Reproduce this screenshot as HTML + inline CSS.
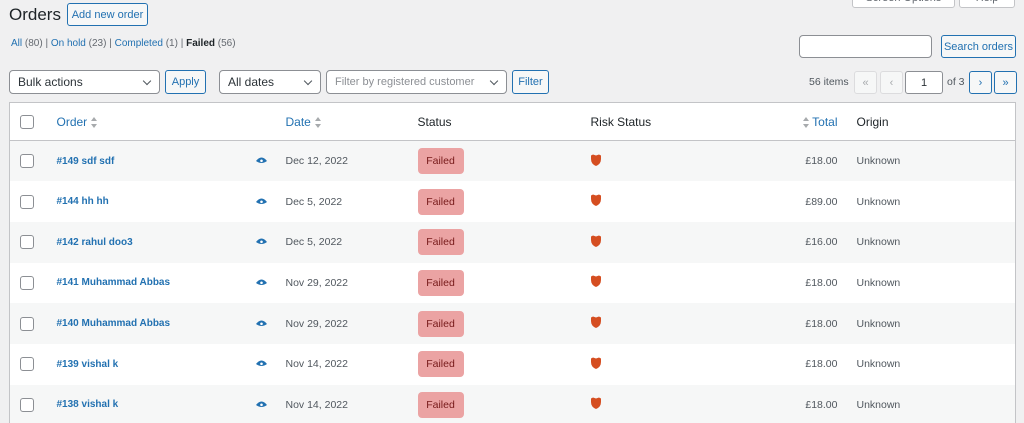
<!DOCTYPE html>
<html><head><style>
*{box-sizing:border-box;margin:0;padding:0}
html,body{width:1024px;height:423px;overflow:hidden}
body{background:#f0f0f1;font-family:"Liberation Sans",sans-serif;font-size:12px;color:#3c434a;position:relative}
.a{position:absolute}
.btn{position:absolute;border:1px solid #2271b1;color:#2271b1;background:#f6f7f7;border-radius:3px;font-size:11px;display:flex;align-items:center;justify-content:center;white-space:nowrap}
.sel{position:absolute;background:#fff;border:1px solid #8c8f94;border-radius:4px;font-size:12px;color:#2c3338;padding-left:8px;display:flex;align-items:center;white-space:nowrap}
.sel:after{content:"";position:absolute;right:9px;top:7px;width:5px;height:5px;border-right:1.5px solid #50575e;border-bottom:1.5px solid #50575e;transform:rotate(45deg)}
.pg{position:absolute;top:71px;width:23px;height:23px;border-radius:3px;display:flex;align-items:center;justify-content:center;font-size:11px}
a{color:#2271b1;text-decoration:none}
table{position:absolute;left:9px;top:102px;width:1007px;border:1px solid #c3c4c7;border-collapse:collapse;background:#fff;table-layout:fixed}
td,th{font-weight:normal;text-align:left;padding:0;vertical-align:middle;white-space:nowrap}
thead tr{height:38px;border-bottom:1px solid #c3c4c7}
thead td{font-size:12px}
tbody tr{height:40.7px}
tbody tr:nth-child(odd){background:#f6f7f7}
.cb{display:block;width:14px;height:14px;border:1px solid #8c8f94;border-radius:3px;background:#fff;margin-left:10px}
.ord{font-weight:bold;font-size:10px;color:#2271b1}
.d{font-size:10.5px;color:#50575e}
.f{display:inline-block;width:46px;height:26px;line-height:26px;text-align:center;background:#eba3a3;color:#761919;border-radius:4px;font-size:10.5px}
.t{text-align:right;font-size:10.5px;color:#50575e;padding-right:19px}
.o{font-size:10.5px;color:#50575e}
.sort{display:inline-block;vertical-align:middle;margin-left:4px;width:7px;height:11px;position:relative}
.sort:before{content:"";position:absolute;top:0;left:0;border:3.5px solid transparent;border-bottom:4px solid #a7aaad;border-top:0}
.sort:after{content:"";position:absolute;bottom:0;left:0;border:3.5px solid transparent;border-top:4px solid #a7aaad;border-bottom:0}
</style></head><body>
<div class="a" style="left:9px;top:5px;font-size:17px;color:#1d2327">Orders</div>
<div class="btn" style="left:67px;top:3px;width:81px;height:23px">Add new order</div>
<div class="btn" style="left:852px;top:-12px;width:103px;height:20px;border-color:#c3c4c7;background:#fff;color:#646970">Screen Options</div>
<div class="btn" style="left:959px;top:-12px;width:56px;height:20px;border-color:#c3c4c7;background:#fff;color:#646970">Help</div>
<div class="a" style="left:11px;top:38px;font-size:10px;color:#646970"><a>All</a> (80) | <a>On hold</a> (23) | <a>Completed</a> (1) | <b style="color:#1d2327">Failed</b> (56)</div>
<div class="a" style="left:799px;top:35px;width:133px;height:23px;background:#fff;border:1px solid #8c8f94;border-radius:4px"></div>
<div class="btn" style="left:941px;top:35px;width:75px;height:23px">Search orders</div>
<div class="sel" style="left:9px;top:70px;width:151px;height:24px">Bulk actions</div>
<div class="btn" style="left:165px;top:70px;width:41px;height:24px">Apply</div>
<div class="sel" style="left:219px;top:70px;width:102px;height:24px">All dates</div>
<div class="sel" style="left:326px;top:70px;width:181px;height:24px;color:#8c8f94;font-size:11px">Filter by registered customer</div>
<div class="btn" style="left:512px;top:70px;width:37px;height:24px">Filter</div>
<div class="a" style="left:809px;top:76px;font-size:10.5px;color:#50575e">56 items</div>
<div class="pg" style="left:854px;border:1px solid #dcdcde;color:#a7aaad;background:#f6f7f7">«</div>
<div class="pg" style="left:880px;border:1px solid #dcdcde;color:#a7aaad;background:#f6f7f7">‹</div>
<div class="pg" style="left:905px;width:38px;border:1px solid #8c8f94;background:#fff;color:#2c3338">1</div>
<div class="a" style="left:947px;top:76px;font-size:10.5px;color:#50575e">of 3</div>
<div class="pg" style="left:969px;border:1px solid #2271b1;color:#2271b1;background:#f6f7f7">›</div>
<div class="pg" style="left:994px;border:1px solid #2271b1;color:#2271b1;background:#f6f7f7">»</div>
<table>
<colgroup><col style="width:47px"><col style="width:199px"><col style="width:30px"><col style="width:132px"><col style="width:173px"><col style="width:185px"><col style="width:81px"><col></colgroup>
<thead><tr><td><span class="cb"></span></td><td><a>Order</a><span class="sort"></span></td><td></td><td><a>Date</a><span class="sort"></span></td><td style="color:#1d2327">Status</td><td style="color:#1d2327">Risk Status</td><td style="text-align:right;padding-right:19px"><span class="sort" style="margin:0 2px 0 0"></span><a>Total</a></td><td style="color:#1d2327">Origin</td></tr></thead>
<tbody>
<tr><td><span class="cb"></span></td><td class="ord">#149 sdf sdf</td><td><svg width="11" height="8" viewBox="0 0 11 8"><path d="M0 4Q5.5-3 11 4Q5.5 8 0 4Z" fill="#2271b1"/><circle cx="5.5" cy="3.8" r="1.3" fill="#fff"/></svg></td><td class="d">Dec 12, 2022</td><td><span class="f">Failed</span></td><td><svg width="10" height="12" viewBox="0 0 10 12"><path d="M0 1.5L2 0.5L5 1.5L8 0.5L10 1.5V5Q10 10 5 12Q0 10 0 5Z" fill="#d54e21"/></svg></td><td class="t">£18.00</td><td class="o">Unknown</td></tr>
<tr><td><span class="cb"></span></td><td class="ord">#144 hh hh</td><td><svg width="11" height="8" viewBox="0 0 11 8"><path d="M0 4Q5.5-3 11 4Q5.5 8 0 4Z" fill="#2271b1"/><circle cx="5.5" cy="3.8" r="1.3" fill="#fff"/></svg></td><td class="d">Dec 5, 2022</td><td><span class="f">Failed</span></td><td><svg width="10" height="12" viewBox="0 0 10 12"><path d="M0 1.5L2 0.5L5 1.5L8 0.5L10 1.5V5Q10 10 5 12Q0 10 0 5Z" fill="#d54e21"/></svg></td><td class="t">£89.00</td><td class="o">Unknown</td></tr>
<tr><td><span class="cb"></span></td><td class="ord">#142 rahul doo3</td><td><svg width="11" height="8" viewBox="0 0 11 8"><path d="M0 4Q5.5-3 11 4Q5.5 8 0 4Z" fill="#2271b1"/><circle cx="5.5" cy="3.8" r="1.3" fill="#fff"/></svg></td><td class="d">Dec 5, 2022</td><td><span class="f">Failed</span></td><td><svg width="10" height="12" viewBox="0 0 10 12"><path d="M0 1.5L2 0.5L5 1.5L8 0.5L10 1.5V5Q10 10 5 12Q0 10 0 5Z" fill="#d54e21"/></svg></td><td class="t">£16.00</td><td class="o">Unknown</td></tr>
<tr><td><span class="cb"></span></td><td class="ord">#141 Muhammad Abbas</td><td><svg width="11" height="8" viewBox="0 0 11 8"><path d="M0 4Q5.5-3 11 4Q5.5 8 0 4Z" fill="#2271b1"/><circle cx="5.5" cy="3.8" r="1.3" fill="#fff"/></svg></td><td class="d">Nov 29, 2022</td><td><span class="f">Failed</span></td><td><svg width="10" height="12" viewBox="0 0 10 12"><path d="M0 1.5L2 0.5L5 1.5L8 0.5L10 1.5V5Q10 10 5 12Q0 10 0 5Z" fill="#d54e21"/></svg></td><td class="t">£18.00</td><td class="o">Unknown</td></tr>
<tr><td><span class="cb"></span></td><td class="ord">#140 Muhammad Abbas</td><td><svg width="11" height="8" viewBox="0 0 11 8"><path d="M0 4Q5.5-3 11 4Q5.5 8 0 4Z" fill="#2271b1"/><circle cx="5.5" cy="3.8" r="1.3" fill="#fff"/></svg></td><td class="d">Nov 29, 2022</td><td><span class="f">Failed</span></td><td><svg width="10" height="12" viewBox="0 0 10 12"><path d="M0 1.5L2 0.5L5 1.5L8 0.5L10 1.5V5Q10 10 5 12Q0 10 0 5Z" fill="#d54e21"/></svg></td><td class="t">£18.00</td><td class="o">Unknown</td></tr>
<tr><td><span class="cb"></span></td><td class="ord">#139 vishal k</td><td><svg width="11" height="8" viewBox="0 0 11 8"><path d="M0 4Q5.5-3 11 4Q5.5 8 0 4Z" fill="#2271b1"/><circle cx="5.5" cy="3.8" r="1.3" fill="#fff"/></svg></td><td class="d">Nov 14, 2022</td><td><span class="f">Failed</span></td><td><svg width="10" height="12" viewBox="0 0 10 12"><path d="M0 1.5L2 0.5L5 1.5L8 0.5L10 1.5V5Q10 10 5 12Q0 10 0 5Z" fill="#d54e21"/></svg></td><td class="t">£18.00</td><td class="o">Unknown</td></tr>
<tr><td><span class="cb"></span></td><td class="ord">#138 vishal k</td><td><svg width="11" height="8" viewBox="0 0 11 8"><path d="M0 4Q5.5-3 11 4Q5.5 8 0 4Z" fill="#2271b1"/><circle cx="5.5" cy="3.8" r="1.3" fill="#fff"/></svg></td><td class="d">Nov 14, 2022</td><td><span class="f">Failed</span></td><td><svg width="10" height="12" viewBox="0 0 10 12"><path d="M0 1.5L2 0.5L5 1.5L8 0.5L10 1.5V5Q10 10 5 12Q0 10 0 5Z" fill="#d54e21"/></svg></td><td class="t">£18.00</td><td class="o">Unknown</td></tr>
</tbody></table>
</body></html>
